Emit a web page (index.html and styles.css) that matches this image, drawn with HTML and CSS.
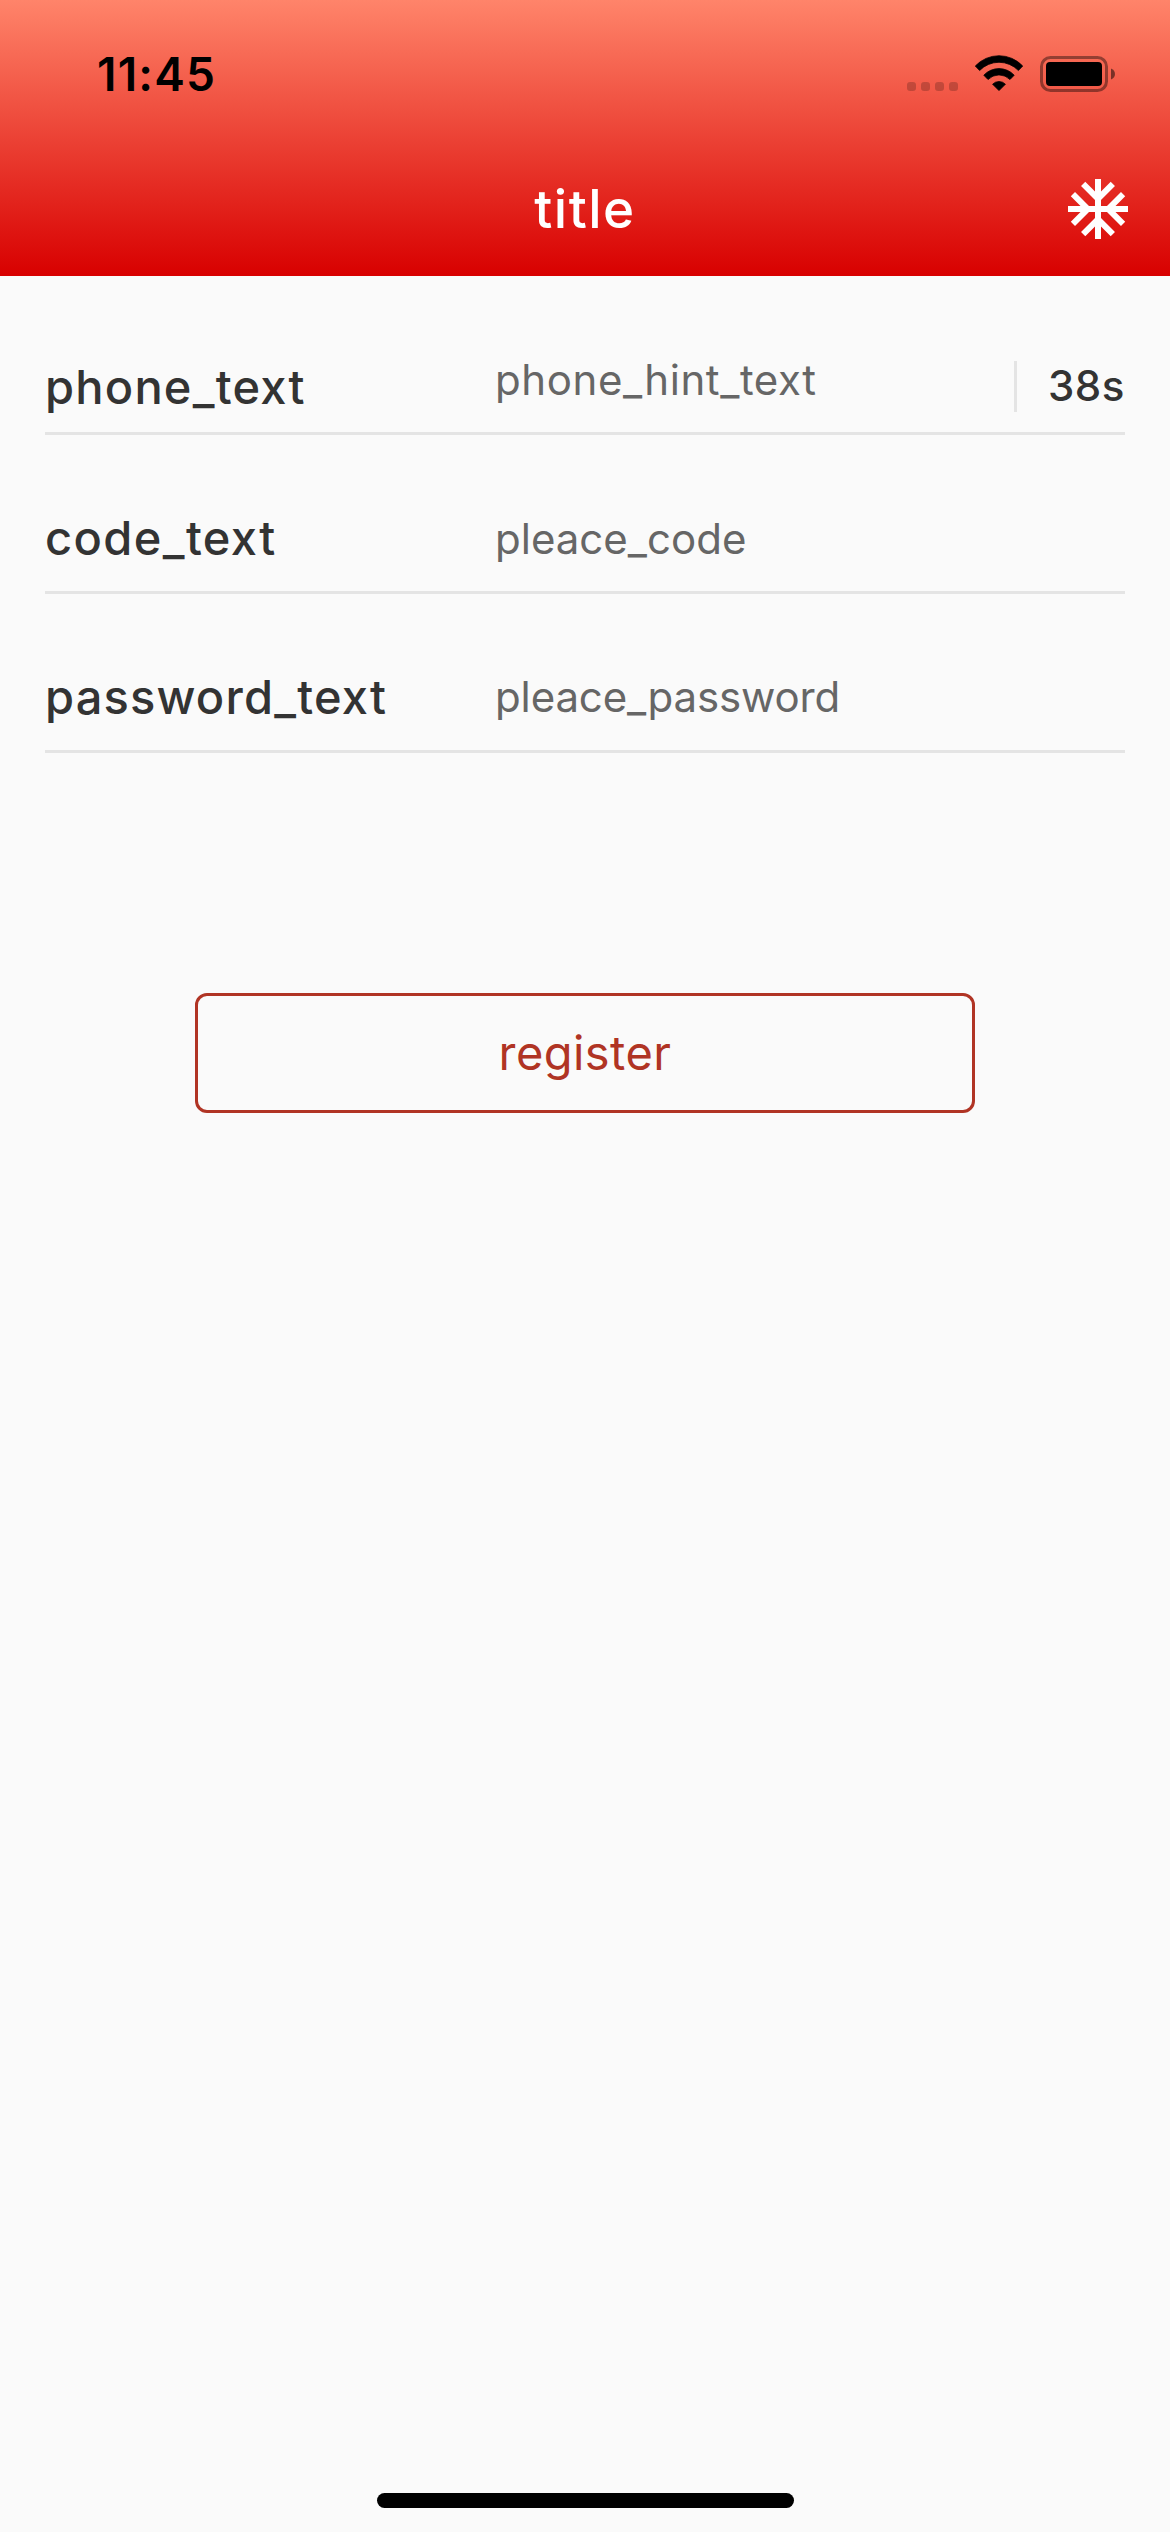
FILE: index.html
```
<!DOCTYPE html>
<html lang="en">
<head>
<meta charset="utf-8">
<title>title</title>
<link rel="stylesheet" href="styles.css">
</head>
<body>
<header class="header">
  <div class="status">
    <span class="time">11:45</span>
    <div class="indicators">
      <svg class="signal" width="51" height="9" viewBox="0 0 51 9"><rect width="9" height="9" rx="3"/><rect x="14" width="9" height="9" rx="3"/><rect x="28" width="9" height="9" rx="3"/><rect x="42" width="9" height="9" rx="3"/></svg>
      <svg class="wifi" width="50" height="37" viewBox="974 55 50 37"><path d="M975.3 66A32.5 32.5 0 0 1 1022.7 66L1018.4 70.5A27 27 0 0 0 979.6 70.5ZM983.8 75.2A20.8 20.8 0 0 1 1014.2 75.2L1010 79.5A15.5 15.5 0 0 0 988 79.5ZM992.6 84.2A9 9 0 0 1 1005.4 84.2L999 90.6Z"/></svg>
      <svg class="battery" width="75" height="36" viewBox="0 0 75 36"><rect x="1.5" y="1.5" width="65" height="33" rx="9" fill="none" stroke="#000" stroke-width="3" opacity=".4"/><rect x="6" y="6" width="56" height="24" rx="4"/><path d="M71 12.5C76.3 14.5 76.3 21.5 71 23.5Z" opacity=".5"/></svg>
    </div>
  </div>
  <div class="nav">
    <h1 class="title">title</h1>
    <svg class="snow" viewBox="0 0 24 24"><path d="M22 11h-4.17l3.24-3.24-1.41-1.42L15 11h-2V9l4.66-4.66-1.42-1.41L13 6.17V2h-2v4.17L7.76 2.93 6.34 4.34 11 9v2H9L4.34 6.34 2.93 7.76 6.17 11H2v2h4.17l-3.24 3.24 1.41 1.42L9 13h2v2l-4.66 4.66 1.42 1.41L11 17.83V22h2v-4.17l3.24 3.24 1.42-1.41L13 15v-2h2l4.66 4.66 1.41-1.42L17.83 13H22z"/></svg>
  </div>
</header>
<main class="form">
  <div class="row phone">
    <span class="label">phone_text</span>
    <span class="hint">phone_hint_text</span>
    <span class="count">38s</span>
  </div>
  <div class="row code">
    <span class="label">code_text</span>
    <span class="hint">pleace_code</span>
  </div>
  <div class="row password">
    <span class="label">password_text</span>
    <span class="hint">pleace_password</span>
  </div>
  <button class="register">register</button>
</main>
<div class="home"></div>
</body>
</html>
```
FILE: styles.css
```
* { box-sizing: border-box; }
body {
  margin: 0;
  height: 2532px;
  display: flex;
  flex-direction: column;
  background: #fafafa;
  color: #333;
  font-family: Inter, "Liberation Sans", sans-serif;
}
svg { display: block; }
.header {
  height: 276px;
  background: linear-gradient(#ff846a, #d80000);
}
.status {
  height: 141px;
  padding: 44px 55px 0 97px;
  display: flex;
  justify-content: space-between;
}
.time {
  font-size: 46px;
  font-weight: 600;
  line-height: 60px;
  letter-spacing: 1.2px;
  color: #000;
}
.indicators { display: flex; align-items: flex-start; padding-top: 11px; }
.signal { margin: 27px 16px 0 0; fill: rgba(0, 0, 0, .2); }
.wifi { margin-right: 16px; stroke: #000; stroke-width: .8; stroke-linejoin: round; }
.battery { margin-top: 1px; }
.nav {
  height: 135px;
  padding: 0 36px;
  display: grid;
  grid-template-columns: 72px 1fr 72px;
  align-items: center;
  color: #fff;
}
.title {
  grid-column: 2;
  margin: 0;
  font-size: 53px;
  font-weight: 500;
  line-height: 72px;
  letter-spacing: 1.5px;
  text-align: center;
}
.snow { width: 72px; height: 72px; fill: #fff; }
.form { flex: 1; padding: 0 45px; display: flex; flex-direction: column; }
.row {
  height: 159px;
  padding-top: 73px;
  border-bottom: 3px solid #e4e4e4;
  display: grid;
  grid-template-columns: 450px 1fr 111px;
  align-items: start;
}
.label { font-size: 47px; font-weight: 500; line-height: 60px; }
.hint { font-size: 42px; line-height: 60px; color: #666; }
.phone .label { margin-top: 8px; letter-spacing: 1.22px; }
.phone .hint { margin-top: 1px; letter-spacing: .6px; }
.code .label { letter-spacing: 1.4px; }
.password .label { letter-spacing: 1.17px; }
.code .hint { margin-top: 1px; }
.password .hint { letter-spacing: -.13px; }
.count {
  height: 51px;
  margin-top: 12px;
  padding-left: 31px;
  border-left: 3px solid #e4e4e4;
  font-size: 42px;
  font-weight: 500;
  line-height: 49px;
  letter-spacing: .5px;
}
.register {
  align-self: center;
  width: 780px;
  height: 120px;
  margin-top: 240px;
  border: 3px solid #b03424;
  border-radius: 12px;
  background: none;
  color: #b03424;
  font: 400 47px/60px Inter, "Liberation Sans", sans-serif;
  letter-spacing: .45px;
}
.home { width: 417px; height: 15px; margin: 0 auto 24px 377px; border-radius: 8px; background: #000; }
```
